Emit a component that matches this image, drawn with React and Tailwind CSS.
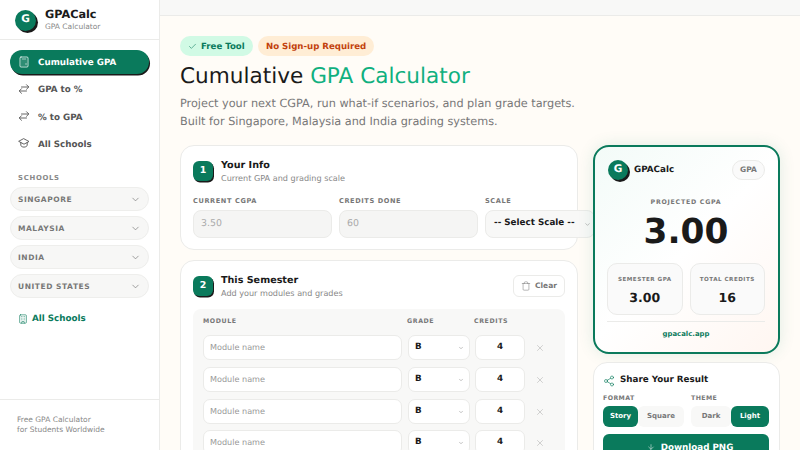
import React from "react";
import { ChevronDown, Building, Check, Trash, Share2, X, ArrowDown, Calculator } from "lucide-react";

function Exchange() {
  return (
    <svg width="12" height="12" viewBox="0 0 12 12" fill="none" stroke="currentColor" strokeWidth="0.9" strokeLinecap="round" strokeLinejoin="round" className="shrink-0">
      <path d="M3.5 4h7M8.5 1.7 10.8 4 8.5 6.3" />
      <path d="M8.5 8h-7M3.5 5.7 1.2 8l2.3 2.3" />
    </svg>
  );
}

function Cap() {
  return (
    <svg width="12" height="12" viewBox="0 0 12 12" fill="none" stroke="currentColor" strokeWidth="0.9" strokeLinecap="round" strokeLinejoin="round" className="shrink-0">
      <path d="M6 1.8 11 4.5 6 7.2 1 4.5Z" />
      <path d="M2.8 5.6v2.6c0 1 1.5 1.9 3.2 1.9s3.2-.9 3.2-1.9V5.6" />
    </svg>
  );
}

function Logo({ size = "w-[22px] h-[22px]" }) {
  return (
    <div className={`${size} rounded-full bg-[#0a7a5c] shadow-[2px_2px_0_#1a1a1a] flex items-center justify-center text-white text-[10.5px] font-bold shrink-0`}>G</div>
  );
}

function NavItem({ icon, label }) {
  return (
    <div className="h-[27.4px] flex items-center pl-[8px] gap-[8px] text-[8.75px] font-bold text-[#555]">
      {icon}
      <span className="pt-[4px]">{label}</span>
    </div>
  );
}

function Pill({ label }) {
  return (
    <div className="h-[24px] rounded-full bg-[#f7f7f6] border border-[#eeeeec] flex items-center justify-between pl-[7px] pr-[7px] text-[7.5px] font-bold tracking-[0.55px] text-[#777]">
      <span>{label}</span>
      <ChevronDown size={11} strokeWidth={1.5} className="text-[#777]" />
    </div>
  );
}

function Step({ n }) {
  return (
    <div className="w-[20px] h-[20px] rounded-[6px] bg-[#0a7a5c] shadow-[1px_1.5px_0_#1a1a1a] text-white text-[9.5px] font-bold flex items-center justify-center shrink-0">{n}</div>
  );
}

function Field({ label, value }) {
  return (
    <div className="w-[139px] shrink-0">
      <div className="text-[6.6px] font-bold tracking-[0.6px] text-[#777] leading-[10px] mb-[4px]">{label}</div>
      <div className="h-[28px] rounded-[8px] bg-[#f5f5f4] border border-[#ebebe9] flex items-center pl-[7px] text-[9.4px] text-[#aaa]">{value}</div>
    </div>
  );
}

function Row({ mb = "mb-[7px]" }) {
  return (
    <div className={`flex items-center h-[25px] ${mb}`}>
      <div className="w-[199px] h-[25px] rounded-[7px] bg-white border border-[#ebebe9] flex items-center pl-[6px] text-[8.1px] text-[#999]">Module name</div>
      <div className="ml-[6px] w-[62px] h-[25px] rounded-[7px] bg-white border border-[#ebebe9] flex items-center justify-between pl-[6px] pr-[5px] text-[8.75px] font-bold text-[#1a1a1a]">
        <span>B</span>
        <ChevronDown size={6} strokeWidth={2} className="text-[#888]" />
      </div>
      <div className="ml-[5px] w-[50px] h-[25px] rounded-[7px] bg-white border border-[#ebebe9] flex items-center justify-center text-[8.75px] font-bold text-[#1a1a1a]">4</div>
      <X size={10} strokeWidth={1.25} className="ml-[10px] text-[#aaa]" />
    </div>
  );
}

function Seg({ label, on, w }) {
  return (
    <div className={`h-[21px] ${w} rounded-[6px] flex items-center justify-center text-[7px] font-bold ${on ? "bg-[#0a7a5c] text-white" : "bg-[#f8f8f7] text-[#777]"}`}>{label}</div>
  );
}

function Stat({ label, value }) {
  return (
    <div className="flex-1 h-[52px] rounded-[10px] border border-[#ebebe9] bg-[#fafafa] flex flex-col items-center pt-[12px]">
      <div className="text-[5.6px] font-bold tracking-[0.5px] text-[#777] leading-[9px]">{label}</div>
      <div className="mt-[5px] text-[12.5px] font-bold leading-[16px]">{value}</div>
    </div>
  );
}

export default function App() {
  return (
    <div className="w-[800px] h-[450px] overflow-hidden flex bg-white text-[#1a1a1a] [text-rendering:geometricPrecision]" style={{ fontFamily: '"DejaVu Sans", sans-serif' }}>
      <aside className="w-[160px] h-full shrink-0 bg-white border-r border-[#ebebe9] flex flex-col">
        <div className="h-[40px] border-b border-[#ebebe9] flex items-center pl-[15px] gap-[9px]">
          <Logo size="w-[21px] h-[21px] mt-px" />
          <div>
            <div className="text-[11.25px] font-bold leading-[14px] text-[#1a1a1a]">GPACalc</div>
            <div className="text-[7.5px] leading-[9px] text-[#888]">GPA Calculator</div>
          </div>
        </div>
        <nav className="px-[10px] pt-[10px]">
          <div className="h-[24px] w-[139px] rounded-[12px] bg-[#0a7a5c] shadow-[1px_1.5px_0_#1a1a1a] flex items-center pl-[8px] gap-[8px] text-[8.75px] font-bold text-white mb-[1px]">
            <Calculator size={12} strokeWidth={1.5} />
            <span className="pt-[4px]">Cumulative GPA</span>
          </div>
          <NavItem icon={<Exchange />} label="GPA to %" />
          <NavItem icon={<Exchange />} label="% to GPA" />
          <NavItem icon={<Cap />} label="All Schools" />
          <div className="mt-[16px] pl-[8px] text-[6.9px] font-bold tracking-[0.7px] text-[#888] leading-[10px] mb-[4px]">SCHOOLS</div>
          <div className="flex flex-col gap-[5px] w-[139px]">
            <Pill label="SINGAPORE" />
            <Pill label="MALAYSIA" />
            <Pill label="INDIA" />
            <Pill label="UNITED STATES" />
          </div>
          <div className="mt-[13px] pl-[8px] flex items-center gap-[4px] text-[8.75px] font-bold text-[#0a7a5c]">
            <Building size={10} strokeWidth={1.5} />
            <span className="pt-[2px]">All Schools</span>
          </div>
        </nav>
        <div className="mt-auto h-[51px] border-t border-[#ebebe9] pl-[17px] pt-[15px] text-[7.5px] leading-[10px] text-[#888]">
          <div>Free GPA Calculator</div>
          <div>for Students Worldwide</div>
        </div>
      </aside>

      <div className="flex-1 min-w-0 flex flex-col bg-[#fffcf7]">
        <div className="h-[16px] shrink-0 bg-[#f8f8f7] border-b border-[#ebebe9]" />
        <main className="px-[20px] pt-[20px] overflow-hidden flex-1">
          <div className="flex gap-[5px]">
            <span className="h-[20px] w-[73px] pl-[8px] rounded-full bg-[#d1fae5] text-[#0a7a5c] text-[8.6px] font-bold flex items-center gap-[4px]">
              <Check size={9} strokeWidth={1.5} /><span className="pt-[2px]">Free Tool</span>
            </span>
            <span className="h-[20px] w-[116px] pl-[8px] rounded-full bg-[#ffedd5] text-[#c2410c] text-[8.6px] font-bold flex items-center"><span className="pt-[2px]">No Sign-up Required</span></span>
          </div>
          <h1 className="mt-[7px] text-[21.6px] leading-[28px] font-normal text-[#1a1a1a]">Cumulative <span className="text-[#10b07f]">GPA Calculator</span></h1>
          <p className="mt-[4px] text-[11.25px] leading-[17.5px] text-[#777]">Project your next CGPA, run what-if scenarios, and plan grade targets.<br />Built for Singapore, Malaysia and India grading systems.</p>

          <div className="mt-[15px] flex gap-[14px] items-start">
            <div className="w-[398px] shrink-0">
              <section className="h-[105px] rounded-[14px] bg-white border border-[#ebebe9] pl-[12px] pt-[15px]">
                <div className="h-[20px] flex items-center gap-[8px]">
                  <Step n="1" />
                  <div className="mt-[2px]">
                    <div className="text-[9.6px] font-bold leading-[12px] text-[#1a1a1a]">Your Info</div>
                    <div className="text-[8.1px] leading-[12px] text-[#888]">Current GPA and grading scale</div>
                  </div>
                </div>
                <div className="flex gap-[7px] mt-[15px]">
                  <Field label="CURRENT CGPA" value="3.50" />
                  <Field label="CREDITS DONE" value="60" />
                  <div className="w-[110px] shrink-0">
                    <div className="text-[6.6px] font-bold tracking-[0.6px] text-[#777] leading-[10px] mb-[4px]">SCALE</div>
                    <div className="h-[28px] rounded-[8px] bg-[#f8f8f7] border border-[#ebebe9] flex items-center justify-between pl-[8px] pr-[3px] text-[8.75px] font-bold text-[#1a1a1a]">
                      <span>-- Select Scale --</span>
                      <ChevronDown size={7} strokeWidth={1.5} className="text-[#777]" />
                    </div>
                  </div>
                </div>
              </section>
              <section className="mt-[10px] h-[300px] rounded-[14px] bg-white border border-[#ebebe9] px-[12px] pt-[15px]">
                <div className="h-[20px] flex items-center gap-[8px]">
                  <Step n="2" />
                  <div className="mt-[2px]">
                    <div className="text-[9.6px] font-bold leading-[12px] text-[#1a1a1a]">This Semester</div>
                    <div className="text-[8.1px] leading-[12px] text-[#888]">Add your modules and grades</div>
                  </div>
                  <div className="ml-auto h-[22px] w-[52px] rounded-[6px] border border-[#ebebe9] bg-white flex items-center justify-center gap-[4px] text-[7.5px] font-bold text-[#777]">
                    <Trash size={10} strokeWidth={1.25} />Clear
                  </div>
                </div>
                <div className="mt-[13px] rounded-[8px] bg-[#f8f8f7] px-[10px] pt-[7px] pb-[10px]">
                  <div className="flex text-[6.25px] font-bold tracking-[0.6px] text-[#777] leading-[12px] mb-[7px]">
                    <span className="w-[204px]">MODULE</span>
                    <span className="w-[67px]">GRADE</span>
                    <span>CREDITS</span>
                  </div>
                  <Row /><Row /><Row mb="mb-[6px]" /><Row />
                </div>
              </section>
            </div>

            <div className="w-[187px] ml-px shrink-0">
              <div className="h-[209px] rounded-[16px] border-2 border-[#0a7a5c] bg-[linear-gradient(135deg,#f3fbf8_0%,#ffffff_50%,#fff6f1_100%)] shadow-[0_0_16px_rgba(10,122,92,0.12)] pl-[12px] pr-[13px] pt-[13px] flex flex-col">
                <div className="flex items-center justify-between pl-px">
                  <div className="flex items-center gap-[6px]">
                    <Logo size="w-[20px] h-[20px]" />
                    <span className="text-[8.75px] font-bold text-[#1a1a1a] pt-[2px]">GPACalc</span>
                  </div>
                  <span className="h-[20px] w-[33px] rounded-full border border-[#ebebe9] bg-[#fafafa] flex items-center justify-center text-[7.5px] font-bold text-[#777]">GPA</span>
                </div>
                <div className="mt-[18px] text-center text-[6.25px] font-bold tracking-[0.75px] text-[#777] leading-[10px]">PROJECTED CGPA</div>
                <div className="mt-[2px] text-center text-[34.4px] font-bold leading-[44px] text-[#1a1a1a]">3.00</div>
                <div className="mt-[9px] flex gap-[7px]">
                  <Stat label="SEMESTER GPA" value="3.00" />
                  <Stat label="TOTAL CREDITS" value="16" />
                </div>
                <div className="mt-[6px] border-t border-[#ebebe9] pt-[7px] text-center text-[6.9px] font-bold text-[#0a7a5c] leading-[10px]">gpacalc.app</div>
              </div>

              <div className="mt-[8px] h-[120px] rounded-[14px] bg-white border border-[#ebebe9] pl-[9px] pr-[9px] pt-[11px]">
                <div className="flex items-center gap-[5px]">
                  <Share2 size={12} strokeWidth={1.25} className="text-[#0a7a5c]" />
                  <span className="text-[8.75px] font-bold text-[#1a1a1a]">Share Your Result</span>
                </div>
                <div className="mt-[7px] flex gap-[7px]">
                  <div className="w-[81px]">
                    <div className="text-[6.25px] font-bold tracking-[0.4px] text-[#777] leading-[10px] mb-[2px]">FORMAT</div>
                    <div className="flex"><Seg label="Story" on w="w-[35px]" /><Seg label="Square" w="w-[46px]" /></div>
                  </div>
                  <div className="w-[78px]">
                    <div className="text-[6.25px] font-bold tracking-[0.4px] text-[#777] leading-[10px] mb-[2px]">THEME</div>
                    <div className="flex"><Seg label="Dark" w="w-[40px]" /><Seg label="Light" on w="w-[38px]" /></div>
                  </div>
                </div>
                <div className="mt-[7px] w-[166px] h-[26px] rounded-[6px] bg-[#0a7a5c] text-white text-[8.75px] font-bold flex items-center justify-center gap-[6px] pl-[8px]">
                  <ArrowDown size={8} strokeWidth={1.5} /><span className="pt-[2px]">Download PNG</span>
                </div>
              </div>
            </div>
          </div>
        </main>
      </div>
    </div>
  );
}
